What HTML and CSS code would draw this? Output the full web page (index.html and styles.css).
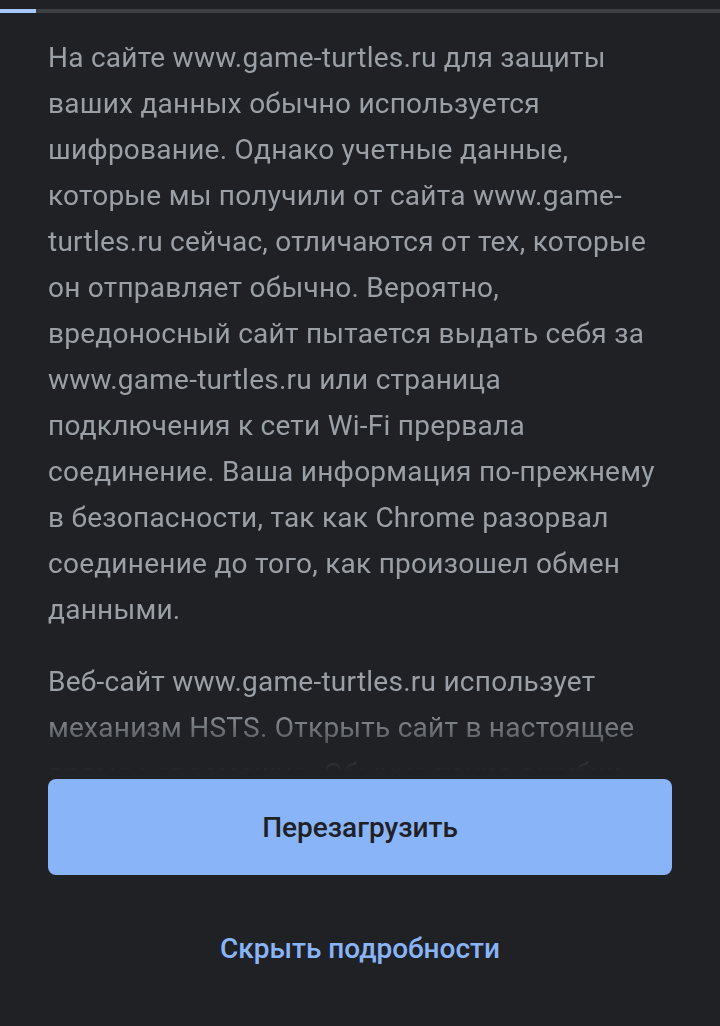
FILE: index.html
```html
<!DOCTYPE html>
<html>
<head>
  <title>Ошибка конфиденциальности</title>
  <link rel="stylesheet" href="styles.css">
</head>
<body>
  <div class="progress">
    <div class="progress-fill"></div>
  </div>

  <div class="details">
    <p>На сайте www.game-turtles.ru для защиты ваших данных обычно используется шифрование. Однако учетные данные, которые мы получили от сайта www.game-turtles.ru сейчас, отличаются от тех, которые он отправляет обычно. Вероятно, вредоносный сайт пытается выдать себя за www.game-turtles.ru или страница подключения к сети Wi-Fi прервала соединение. Ваша информация по-прежнему в безопасности, так как Chrome разорвал соединение до того, как произошел обмен данными.</p>
    <p>Веб-сайт www.game-turtles.ru использует механизм HSTS. Открыть сайт в настоящее время невозможно. Обычно такие ошибки возникают из-за неполадок в сети или атаки.</p>
  </div>

  <div class="actions">
    <button class="button">Перезагрузить</button>
    <a class="link" href="#">Скрыть подробности</a>
  </div>
</body>
</html>
```

FILE: styles.css
```css
body {
  margin: 0;
  background-color: #202124;
  font-family: Roboto, "Noto Sans", sans-serif;
  color: #9aa0a6;
}

.progress {
  margin-top: 9px;
  height: 4px;
  background-color: #3c4043;
}

.progress-fill {
  width: 36px;
  height: 100%;
  background-color: #a8c7fa;
}

.details {
  height: 758px;
  overflow: hidden;
  padding: 0 48px;
  box-sizing: border-box;
  padding-top: 22px;
  -webkit-mask-image: linear-gradient(to bottom, #000 calc(100% - 64px), transparent 100%);
  mask-image: linear-gradient(to bottom, #000 calc(100% - 64px), transparent 100%);
}

.details p {
  margin: 0 0 26px;
  font-size: 28px;
  letter-spacing: 0.25px;
  line-height: 46px;
}

.actions {
  display: flex;
  flex-direction: column;
  align-items: center;
  padding: 8px 48px 0;
}

.button {
  width: 100%;
  height: 96px;
  border: none;
  border-radius: 8px;
  background-color: #8ab4f8;
  color: #202124;
  font-family: Roboto, "Noto Sans", sans-serif;
  font-size: 28px;
  font-weight: 500;
  cursor: pointer;
}

.link {
  margin-top: 57px;
  color: #8ab4f8;
  font-size: 28px;
  font-weight: 500;
  text-decoration: none;
}
```
